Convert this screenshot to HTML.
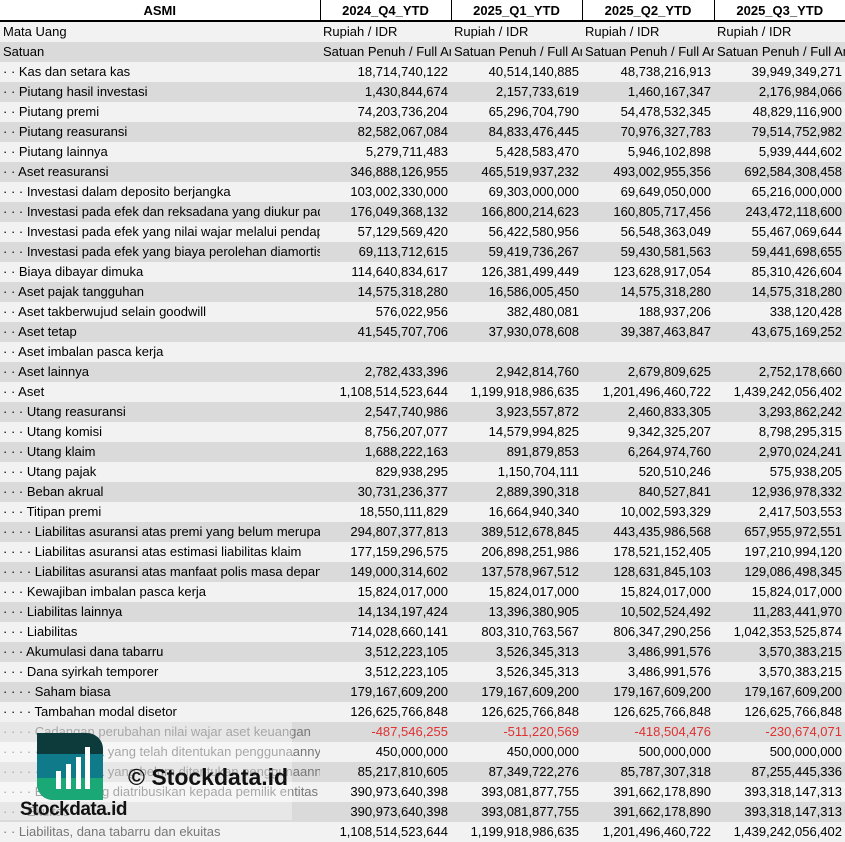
<!DOCTYPE html>
<html><head><meta charset="utf-8"><style>
body{margin:0;width:845px;height:841px;overflow:hidden;background:#fff;font-family:"Liberation Sans",sans-serif;font-size:13px;position:relative}
table{border-collapse:collapse;table-layout:fixed;width:845px}
td{height:20px;padding:0 3px;white-space:nowrap;overflow:hidden;text-overflow:clip;text-align:right;box-sizing:border-box;line-height:20px}
td:first-child{text-align:left}
tr:nth-child(even) td{background:#f2f2f2}
tr:nth-child(odd) td{background:#dadada}
tr.h td{background:#fff;font-weight:bold;text-align:center;border-right:1px solid #000;border-bottom:2px solid #000;height:21px;line-height:19px}
tr.h td:last-child{border-right:none}
.l td{text-align:left}
.r td{color:#e03030}
.r td:first-child{color:#777}
.g td:first-child{color:#777}
.wm{position:absolute;left:0;top:722px;width:292px;height:98px;background:rgba(255,255,255,0.35)}
</style></head><body>
<table>
<colgroup><col style="width:320px"><col style="width:131px"><col style="width:131px"><col style="width:132px"><col style="width:131px"></colgroup>
<tr class="h"><td style="text-align:center">ASMI</td><td>2024_Q4_YTD</td><td>2025_Q1_YTD</td><td>2025_Q2_YTD</td><td>2025_Q3_YTD</td></tr>
<tr class="l"><td>Mata Uang</td><td>Rupiah / IDR</td><td>Rupiah / IDR</td><td>Rupiah / IDR</td><td>Rupiah / IDR</td></tr>
<tr class="l"><td>Satuan</td><td>Satuan Penuh / Full Amount</td><td>Satuan Penuh / Full Amount</td><td>Satuan Penuh / Full Amount</td><td>Satuan Penuh / Full Amount</td></tr>
<tr><td>· · Kas dan setara kas</td><td>18,714,740,122</td><td>40,514,140,885</td><td>48,738,216,913</td><td>39,949,349,271</td></tr>
<tr><td>· · Piutang hasil investasi</td><td>1,430,844,674</td><td>2,157,733,619</td><td>1,460,167,347</td><td>2,176,984,066</td></tr>
<tr><td>· · Piutang premi</td><td>74,203,736,204</td><td>65,296,704,790</td><td>54,478,532,345</td><td>48,829,116,900</td></tr>
<tr><td>· · Piutang reasuransi</td><td>82,582,067,084</td><td>84,833,476,445</td><td>70,976,327,783</td><td>79,514,752,982</td></tr>
<tr><td>· · Piutang lainnya</td><td>5,279,711,483</td><td>5,428,583,470</td><td>5,946,102,898</td><td>5,939,444,602</td></tr>
<tr><td>· · Aset reasuransi</td><td>346,888,126,955</td><td>465,519,937,232</td><td>493,002,955,356</td><td>692,584,308,458</td></tr>
<tr><td>· · · Investasi dalam deposito berjangka</td><td>103,002,330,000</td><td>69,303,000,000</td><td>69,649,050,000</td><td>65,216,000,000</td></tr>
<tr><td>· · · Investasi pada efek dan reksadana yang diukur pada nilai wajar</td><td>176,049,368,132</td><td>166,800,214,623</td><td>160,805,717,456</td><td>243,472,118,600</td></tr>
<tr><td>· · · Investasi pada efek yang nilai wajar melalui pendapatan</td><td>57,129,569,420</td><td>56,422,580,956</td><td>56,548,363,049</td><td>55,467,069,644</td></tr>
<tr><td>· · · Investasi pada efek yang biaya perolehan diamortisasi</td><td>69,113,712,615</td><td>59,419,736,267</td><td>59,430,581,563</td><td>59,441,698,655</td></tr>
<tr><td>· · Biaya dibayar dimuka</td><td>114,640,834,617</td><td>126,381,499,449</td><td>123,628,917,054</td><td>85,310,426,604</td></tr>
<tr><td>· · Aset pajak tangguhan</td><td>14,575,318,280</td><td>16,586,005,450</td><td>14,575,318,280</td><td>14,575,318,280</td></tr>
<tr><td>· · Aset takberwujud selain goodwill</td><td>576,022,956</td><td>382,480,081</td><td>188,937,206</td><td>338,120,428</td></tr>
<tr><td>· · Aset tetap</td><td>41,545,707,706</td><td>37,930,078,608</td><td>39,387,463,847</td><td>43,675,169,252</td></tr>
<tr><td>· · Aset imbalan pasca kerja</td><td></td><td></td><td></td><td></td></tr>
<tr><td>· · Aset lainnya</td><td>2,782,433,396</td><td>2,942,814,760</td><td>2,679,809,625</td><td>2,752,178,660</td></tr>
<tr><td>· · Aset</td><td>1,108,514,523,644</td><td>1,199,918,986,635</td><td>1,201,496,460,722</td><td>1,439,242,056,402</td></tr>
<tr><td>· · · Utang reasuransi</td><td>2,547,740,986</td><td>3,923,557,872</td><td>2,460,833,305</td><td>3,293,862,242</td></tr>
<tr><td>· · · Utang komisi</td><td>8,756,207,077</td><td>14,579,994,825</td><td>9,342,325,207</td><td>8,798,295,315</td></tr>
<tr><td>· · · Utang klaim</td><td>1,688,222,163</td><td>891,879,853</td><td>6,264,974,760</td><td>2,970,024,241</td></tr>
<tr><td>· · · Utang pajak</td><td>829,938,295</td><td>1,150,704,111</td><td>520,510,246</td><td>575,938,205</td></tr>
<tr><td>· · · Beban akrual</td><td>30,731,236,377</td><td>2,889,390,318</td><td>840,527,841</td><td>12,936,978,332</td></tr>
<tr><td>· · · Titipan premi</td><td>18,550,111,829</td><td>16,664,940,340</td><td>10,002,593,329</td><td>2,417,503,553</td></tr>
<tr><td>· · · · Liabilitas asuransi atas premi yang belum merupakan pendapatan</td><td>294,807,377,813</td><td>389,512,678,845</td><td>443,435,986,568</td><td>657,955,972,551</td></tr>
<tr><td>· · · · Liabilitas asuransi atas estimasi liabilitas klaim</td><td>177,159,296,575</td><td>206,898,251,986</td><td>178,521,152,405</td><td>197,210,994,120</td></tr>
<tr><td>· · · · Liabilitas asuransi atas manfaat polis masa depan</td><td>149,000,314,602</td><td>137,578,967,512</td><td>128,631,845,103</td><td>129,086,498,345</td></tr>
<tr><td>· · · Kewajiban imbalan pasca kerja</td><td>15,824,017,000</td><td>15,824,017,000</td><td>15,824,017,000</td><td>15,824,017,000</td></tr>
<tr><td>· · · Liabilitas lainnya</td><td>14,134,197,424</td><td>13,396,380,905</td><td>10,502,524,492</td><td>11,283,441,970</td></tr>
<tr><td>· · · Liabilitas</td><td>714,028,660,141</td><td>803,310,763,567</td><td>806,347,290,256</td><td>1,042,353,525,874</td></tr>
<tr><td>· · · Akumulasi dana tabarru</td><td>3,512,223,105</td><td>3,526,345,313</td><td>3,486,991,576</td><td>3,570,383,215</td></tr>
<tr><td>· · · Dana syirkah temporer</td><td>3,512,223,105</td><td>3,526,345,313</td><td>3,486,991,576</td><td>3,570,383,215</td></tr>
<tr><td>· · · · Saham biasa</td><td>179,167,609,200</td><td>179,167,609,200</td><td>179,167,609,200</td><td>179,167,609,200</td></tr>
<tr><td>· · · · Tambahan modal disetor</td><td>126,625,766,848</td><td>126,625,766,848</td><td>126,625,766,848</td><td>126,625,766,848</td></tr>
<tr class="r"><td>· · · · Cadangan perubahan nilai wajar aset keuangan</td><td>-487,546,255</td><td>-511,220,569</td><td>-418,504,476</td><td>-230,674,071</td></tr>
<tr class="g"><td>· · · · · Saldo laba yang telah ditentukan penggunaannya</td><td>450,000,000</td><td>450,000,000</td><td>500,000,000</td><td>500,000,000</td></tr>
<tr class="g"><td>· · · · · Saldo laba yang belum ditentukan penggunaannya</td><td>85,217,810,605</td><td>87,349,722,276</td><td>85,787,307,318</td><td>87,255,445,336</td></tr>
<tr class="g"><td>· · · · Ekuitas yang diatribusikan kepada pemilik entitas induk</td><td>390,973,640,398</td><td>393,081,877,755</td><td>391,662,178,890</td><td>393,318,147,313</td></tr>
<tr class="g"><td>· · · Ekuitas</td><td>390,973,640,398</td><td>393,081,877,755</td><td>391,662,178,890</td><td>393,318,147,313</td></tr>
<tr class="g"><td>· · Liabilitas, dana tabarru dan ekuitas</td><td>1,108,514,523,644</td><td>1,199,918,986,635</td><td>1,201,496,460,722</td><td>1,439,242,056,402</td></tr>
</table>
<div class="wm"></div>
<svg style="position:absolute;left:37px;top:733px" width="66" height="67" viewBox="0 0 66 67">
<defs><clipPath id="c"><path d="M0 0H50A16 16 0 0 1 66 16V67H16A16 16 0 0 1 0 51Z"/></clipPath></defs>
<g clip-path="url(#c)"><rect width="66" height="67" fill="#0d3b3c"/><rect y="21" width="66" height="24" fill="#0f7a8a"/><rect y="45" width="66" height="22" fill="#1aa876"/></g>
<rect x="19" y="38" width="5" height="18" fill="#fff"/><rect x="29" y="31" width="5" height="25" fill="#fff"/><rect x="39" y="24" width="5" height="32" fill="#fff"/><rect x="48" y="14" width="5" height="42" fill="#fff"/>
</svg>
<div style="position:absolute;left:20px;top:799px;font-weight:bold;font-size:19px;color:#111;letter-spacing:-0.5px">Stockdata.id</div>
<div style="position:absolute;left:128px;top:764px;font-weight:bold;font-size:23px;color:#111">© Stockdata.id</div>
</body></html>
